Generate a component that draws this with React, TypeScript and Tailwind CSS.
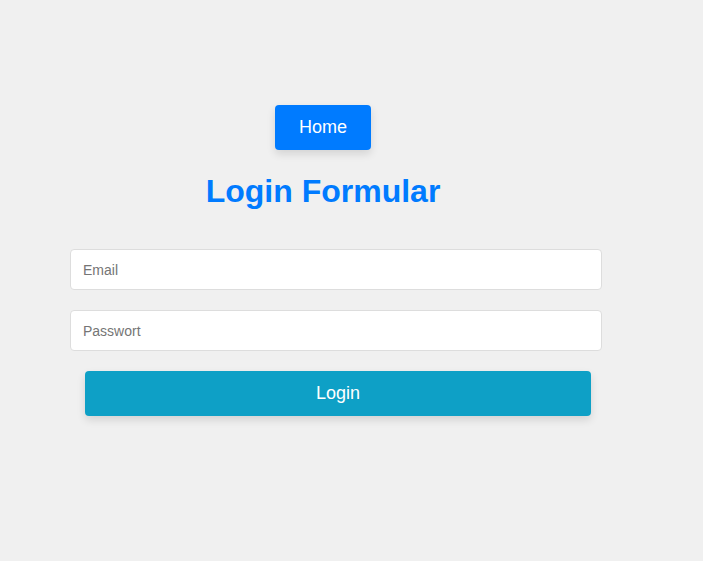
import React from "react";

export default function App() {
  return (
    <div
      className="min-h-[561px] w-full bg-[#f0f0f0]"
      style={{ fontFamily: '"Liberation Sans", Arial, sans-serif' }}
    >
      <div className="ml-[70px] w-[506px] pt-[105px] flex flex-col items-center">
        <button className="w-[96px] h-[45px] rounded-[4px] bg-[#007bff] text-white text-[18px] shadow-[0_4px_8px_rgba(0,0,0,0.12)]">
          Home
        </button>
        <h1 className="mt-[23px] text-[32px] leading-[37px] font-bold text-[#007bff]">
          Login Formular
        </h1>
        <form className="mt-[39px] w-full flex flex-col">
          <input
            type="email"
            placeholder="Email"
            className="w-[532px] h-[41px] px-[12px] bg-white border border-[#dddddd] rounded-[4px] text-[14px] placeholder:text-[#757575] outline-none"
          />
          <input
            type="password"
            placeholder="Passwort"
            className="mt-[20px] w-[532px] h-[41px] px-[12px] bg-white border border-[#dddddd] rounded-[4px] text-[14px] placeholder:text-[#757575] outline-none"
          />
          <button
            type="button"
            className="mt-[20px] ml-[15px] w-[506px] h-[45px] rounded-[4px] bg-[#0ea0c6] text-white text-[18px] shadow-[0_4px_8px_rgba(0,0,0,0.12)]"
          >
            Login
          </button>
        </form>
      </div>
    </div>
  );
}
